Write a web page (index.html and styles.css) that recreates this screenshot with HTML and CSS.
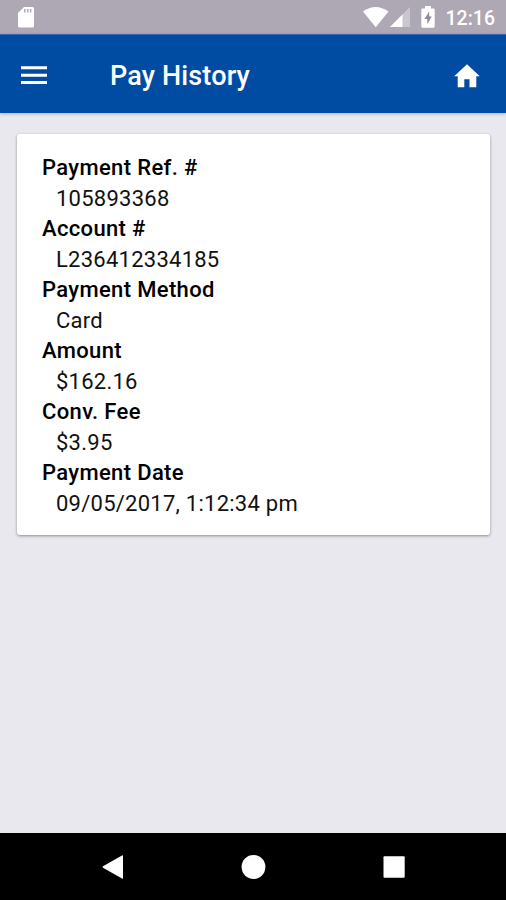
FILE: index.html
```
<!DOCTYPE html>
<html lang="en">
<head>
    <meta charset="UTF-8">
    <meta name="viewport" content="width=device-width, initial-scale=1.0">
    <title>Pay History</title>
    <link rel="stylesheet" href="styles.css">
</head>
<body>
    <div class="status-bar">
        <svg class="sd-card" width="17" height="21" viewBox="0 0 17 21">
            <path fill="#fff" d="M6 0h8.500q1.500 0 1.500 1.500v17.500q0 1.500-1.500 1.500h-13q-1.500 0-1.500-1.500V6z"/>
            <path stroke="#aea8b4" stroke-width="1.500" d="M6.800 2v3.500M9.700 2v3.500M12.600 2v3.500"/>
        </svg>
        <div class="status-icons">
            <svg class="wifi" width="26" height="21" viewBox="0 0 26 21">
                <path fill="#fff" d="M0 4.500Q12.500-4.500 25.500 4.500L12.800 20.300z"/>
            </svg>
            <svg class="signal" width="20" height="20" viewBox="0 0 20 20">
                <path fill="#fff" fill-opacity=".35" d="M20 0v20H0z"/>
                <path fill="#fff" d="M12.500 7.500V20H0z"/>
            </svg>
            <svg class="battery" width="14" height="22" viewBox="0 0 14 22">
                <path fill="#fff" d="M4 0h6v2.500h2.500q1.200 0 1.200 1.200v16.600q0 1.400-1.200 1.400h-11q-1.200 0-1.200-1.400V3.700q0-1.200 1.200-1.200H4z"/>
                <path fill="#8f8a96" d="M8.200 5.500L3.500 13h2.800v5L10.800 10.500H8.200z"/>
            </svg>
            <span class="clock">12:16</span>
        </div>
    </div>
    <header class="toolbar">
        <svg class="menu" width="26" height="19" viewBox="0 0 26 19">
            <path fill="#fff" d="M0 .3h26v3H0zM0 7.700h26v3H0zM0 15h26v3H0z"/>
        </svg>
        <h1 class="title">Pay History</h1>
        <svg class="home" width="26" height="24" viewBox="0 0 26 24">
            <path fill="#fff" d="M10.300 23.200v-7.900h5.200v7.900h6.800V12.300h3.500L13 .2.200 12.300h3.500v10.900z"/>
        </svg>
    </header>
    <main class="content">
        <dl class="card">
            <dt>Payment Ref. #</dt>
            <dd>105893368</dd>
            <dt>Account #</dt>
            <dd>L236412334185</dd>
            <dt>Payment Method</dt>
            <dd>Card</dd>
            <dt>Amount</dt>
            <dd>$162.16</dd>
            <dt>Conv. Fee</dt>
            <dd>$3.95</dd>
            <dt>Payment Date</dt>
            <dd>09/05/2017, 1:12:34 pm</dd>
        </dl>
    </main>
    <nav class="nav-bar">
        <svg width="26" height="26" viewBox="0 0 26 26">
            <path fill="#fff" d="M23 1.800v22.400q0 1-1 .4L3 13.700q-1-.7 0-1.400L22 1.400q1-.6 1 .4z"/>
        </svg>
        <svg width="26" height="26" viewBox="0 0 26 26">
            <circle cx="12.500" cy="13" r="11.900" fill="#fff"/>
        </svg>
        <svg width="26" height="26" viewBox="0 0 26 26">
            <rect x="2.500" y="2.200" width="21.200" height="21.600" rx="1" fill="#fff"/>
        </svg>
    </nav>
</body>
</html>
```
FILE: styles.css
```
* {
    box-sizing: border-box;
}
body {
    margin: 0;
    height: 900px;
    display: flex;
    flex-direction: column;
    font-family: Roboto, sans-serif;
    background: #e9e8ee;
    overflow: hidden;
}
.status-bar {
    height: 34px;
    padding: 0 11px 0 18px;
    display: flex;
    align-items: center;
    justify-content: space-between;
    background: #aea8b4;
    color: #fff;
}
.status-icons {
    display: flex;
    align-items: center;
}
.wifi {
    margin-right: 1px;
}
.battery {
    margin-left: 11px;
}
.clock {
    margin-left: 11px;
    font-size: 19.5px;
    font-weight: 500;
    line-height: 34px;
    padding-top: 3px;
}
.toolbar {
    height: 79px;
    padding: 3px 26px 0 21px;
    display: flex;
    align-items: center;
    background: #004ca3;
    color: #fff;
    border-top: 1px solid #3a66a8;
    box-shadow: 0 1px 3px rgba(0, 0, 0, 0.25);
}
.title {
    flex: 1;
    margin: 0 0 0 63px;
    font-size: 27px;
    font-weight: 500;
    line-height: 32px;
    letter-spacing: 0.15px;
}
.content {
    flex: 1;
    padding: 21px 16px 0 17px;
}
.card {
    height: 401px;
    margin: 0;
    padding: 19px 25px;
    background: #fff;
    border-radius: 3px;
    box-shadow: 0 1px 3px rgba(0, 0, 0, 0.4);
    font-size: 22px;
    color: #000;
}
.card dt {
    font-weight: 500;
    line-height: 30px;
    letter-spacing: 0.35px;
}
.card dd {
    margin: 0 0 0 14px;
    line-height: 31px;
    letter-spacing: 0.25px;
    color: #111;
}
.nav-bar {
    height: 67px;
    padding: 0 99px 0 100px;
    display: flex;
    align-items: center;
    justify-content: space-between;
    background: #000;
}
```
